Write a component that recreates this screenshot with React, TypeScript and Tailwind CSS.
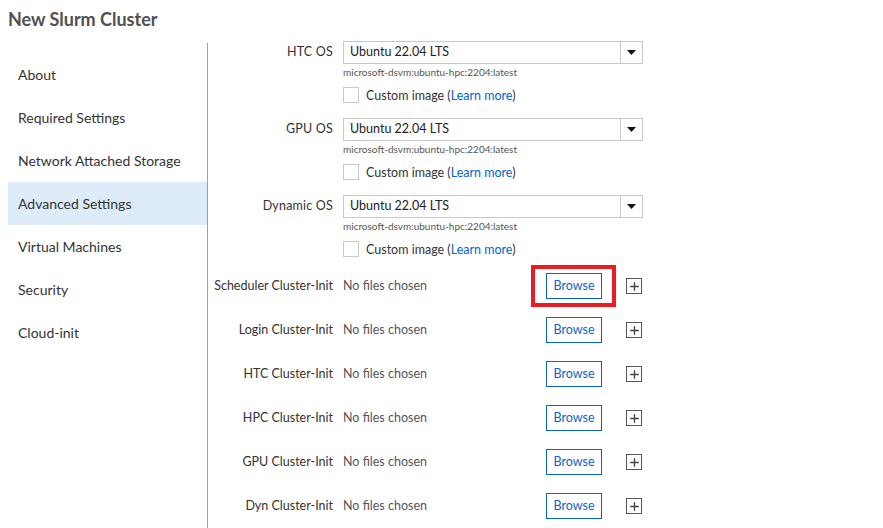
import { Plus } from "lucide-react";

const navItems = [
  "About",
  "Required Settings",
  "Network Attached Storage",
  "Advanced Settings",
  "Virtual Machines",
  "Security",
  "Cloud-init",
];

const osRows = ["HTC OS", "GPU OS", "Dynamic OS"];

const initRows = [
  "Scheduler Cluster-Init",
  "Login Cluster-Init",
  "HTC Cluster-Init",
  "HPC Cluster-Init",
  "GPU Cluster-Init",
  "Dyn Cluster-Init",
];

function OsBlock({ label }: { label: string }) {
  return (
    <div className="flex flex-col">
      <div className="flex h-[23px] items-center">
        <div className="w-[125px] whitespace-nowrap text-right text-[12.5px] tracking-[0.2px] text-[#333]">{label}</div>
        <div className="ml-[10px] flex h-[23px] w-[300px] items-center border border-[#c8c8c8] bg-white">
          <span className="flex-1 pl-[6px] text-[12.5px] text-[#222]">Ubuntu 22.04 LTS</span>
          <span className="flex h-full w-[22px] items-center justify-center border-l border-[#c8c8c8]">
            <svg width="9" height="5" viewBox="0 0 9 5">
              <path d="M0 0 L9 0 L4.5 5 Z" fill="#111" />
            </svg>
          </span>
        </div>
      </div>
      <div className="ml-[135px] mt-[1px] h-[14px] whitespace-nowrap text-[10px] leading-[14px] text-[#555]">
        microsoft-dsvm:ubuntu-hpc:2204:latest
      </div>
      <div className="ml-[135px] mt-[8px] flex h-[16px] items-center">
        <span className="h-[16px] w-[16px] border border-[#c8c8c8] bg-white" />
        <span className="ml-[7px] mt-[2px] whitespace-nowrap text-[12.5px] text-[#333]">
          Custom image (<span className="text-[#0066cc]">Learn more</span>)
        </span>
      </div>
    </div>
  );
}

function InitRow({ label, highlight }: { label: string; highlight?: boolean }) {
  return (
    <div className="flex h-[26px] items-center">
      <div className="w-[125px] whitespace-nowrap text-right text-[12.5px] text-[#333]">{label}</div>
      <div className="ml-[10px] w-[203px] whitespace-nowrap text-[12.5px] text-[#555]">No files chosen</div>
      <div className="relative">
        <button className="flex h-[26px] w-[56px] items-center justify-center border border-[#0b63ce] bg-white text-[12.5px] text-[#0b63ce]">
          Browse
        </button>
        {highlight ? (
          <div className="absolute -left-[15px] -top-[8px] h-[42px] w-[85px] border-4 border-[#ec1c24]" />
        ) : null}
      </div>
      <span className="ml-[24px] flex h-[16px] w-[16px] items-center justify-center border border-[#555]">
        <Plus size={13} strokeWidth={2.5} color="#444" />
      </span>
    </div>
  );
}

export default function App() {
  return (
    <div
      className="relative h-[528px] w-[883px] overflow-hidden bg-white"
      style={{ fontFamily: '"Segoe UI", Lato, "Open Sans", sans-serif' }}
    >
      <div className="flex h-[41px] items-center pl-[8px]">
        <h1 className="-mt-[2px] text-[18px] font-bold text-[#505050]">New Slurm Cluster</h1>
      </div>

      <div className="flex">
        <nav className="ml-[8px] w-[199px] pt-[12px]">
          {navItems.map((item) => (
            <div
              key={item}
              className={`flex h-[43px] items-center whitespace-nowrap pl-[10px] text-[14px] text-[#333] ${
                item === "Advanced Settings" ? "bg-[#deecf9]" : ""
              }`}
            >
              {item}
            </div>
          ))}
        </nav>

        <div className="mt-[2px] w-px self-stretch bg-[#a0a0a0]" style={{ height: 490 }} />

        <main className="flex flex-col">
          <div className="flex flex-col gap-[15px]">
            {osRows.map((label) => (
              <OsBlock key={label} label={label} />
            ))}
          </div>
          <div className="mt-[16px] flex flex-col gap-[18px]">
            {initRows.map((label, i) => (
              <InitRow key={label} label={label} highlight={i === 0} />
            ))}
          </div>
        </main>
      </div>
    </div>
  );
}
